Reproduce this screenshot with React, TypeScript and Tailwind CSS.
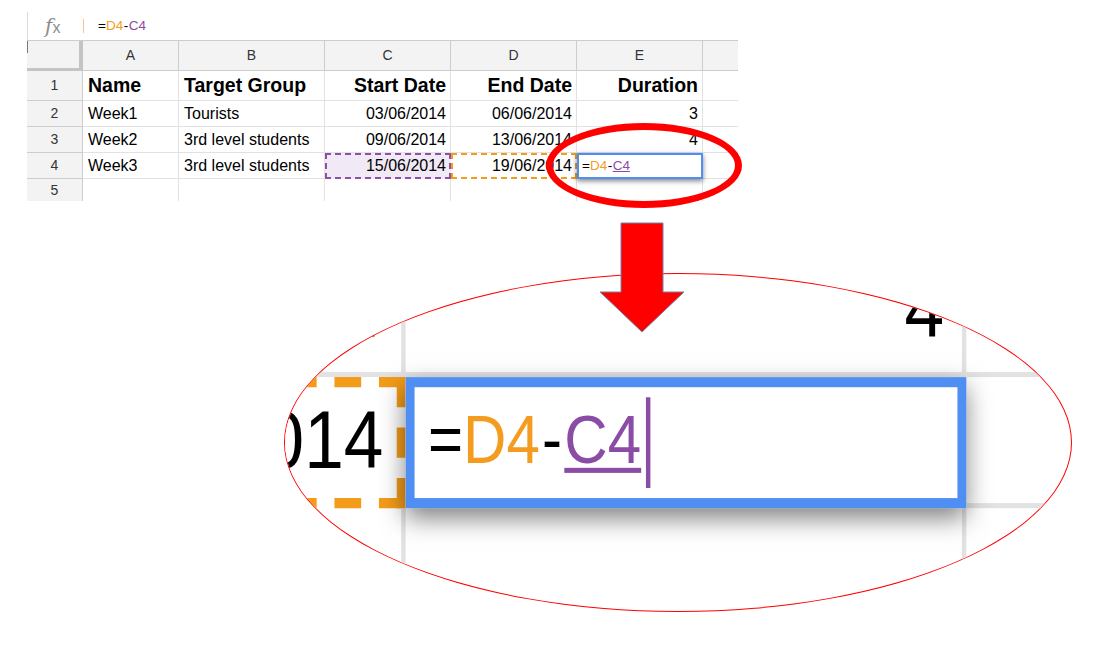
import React from "react";

const sans = "font-['Liberation_Sans',Arial,sans-serif]";

// grid lines
const cellBase = "flex items-center border-r border-b border-[#e2e2e2] overflow-hidden whitespace-nowrap";
const headBase = "flex items-center justify-center border-r border-b border-[#cdcdcd] bg-[#f3f3f3] text-[14px] text-[#333]";

const Formula: React.FC<{ underline?: boolean; caret?: boolean }> = ({ underline, caret }) => (
    <span className="flex items-center">
        <span className="text-black">=</span>
        <span className="text-[#f39c1f]">D4</span>
        <span className="px-[0.5px] text-black">-</span>
        <span className={underline ? "text-[#8b4ca6] underline decoration-[#8b4ca6]" : "text-[#8b4ca6]"}>C4</span>
        {caret && <span className="ml-[0.6px] h-[18px] w-[0.7px] bg-[#8b4ca6]" />}
    </span>
);

const Sheet: React.FC<{ caret?: boolean }> = ({ caret }) => {
    const rows = [
        { n: "1", a: "Name", b: "Target Group", c: "Start Date", d: "End Date", e: "Duration", bold: true },
        { n: "2", a: "Week1", b: "Tourists", c: "03/06/2014", d: "06/06/2014", e: "3" },
        { n: "3", a: "Week2", b: "3rd level students", c: "09/06/2014", d: "13/06/2014", e: "4" },
    ];

    return (
        <div className={`pl-[27px] pt-[12px] ${sans}`}>
            {/* formula bar */}
            <div className="flex h-[28px] w-[711px] items-center border-l border-[#dadada]">
                <div className="flex w-[55px] items-end pl-[17px] text-[#8c8c8c]">
                    <span className="font-['DejaVu_Serif',serif] text-[20px] italic leading-none">f</span>
                    <span className="text-[16px] leading-none">x</span>
                </div>
                <div className="h-[14px] w-px bg-[#f5c395]" />
                <div className="pl-[14px] text-[13.5px]">
                    <Formula />
                </div>
            </div>

            {/* grid */}
            <div className="grid w-[711px] grid-cols-[56px_96px_146px_126px_126px_126px_35px] grid-rows-[30px_30px_26px_26px_26px_22px] border-t border-[#cdcdcd] text-[16px] text-black">
                {/* column headers */}
                <div className="relative border-r-[4px] border-b-[3px] border-[#c4c4c4] bg-[#f3f3f3]">
                    <div className="absolute left-0 top-0 h-[12px] w-px bg-[#777]" />
                </div>
                <div className={headBase}>A</div>
                <div className={headBase}>B</div>
                <div className={headBase}>C</div>
                <div className={headBase}>D</div>
                <div className={`${headBase} bg-[#dcdcdc]`}>E</div>
                <div className="border-b border-[#cdcdcd] bg-[#f3f3f3]" />

                {rows.map((r) => (
                    <React.Fragment key={r.n}>
                        <div className={headBase}>{r.n}</div>
                        <div className={`${cellBase} pl-[5px] ${r.bold ? "text-[19.5px] font-bold" : ""}`}>{r.a}</div>
                        <div className={`${cellBase} pl-[5px] ${r.bold ? "text-[19.5px] font-bold" : ""}`}>{r.b}</div>
                        <div className={`${cellBase} justify-end pr-[4px] ${r.bold ? "text-[19.5px] font-bold" : ""}`}>{r.c}</div>
                        <div className={`${cellBase} justify-end pr-[4px] ${r.bold ? "text-[19.5px] font-bold" : ""}`}>{r.d}</div>
                        <div className={`${cellBase} justify-end pr-[4px] ${r.bold ? "text-[19.5px] font-bold" : ""}`}>{r.e}</div>
                        <div className="border-b border-[#e2e2e2]" />
                    </React.Fragment>
                ))}

                {/* row 4 with the reference selections */}
                <div className={`${headBase} bg-[#dcdcdc]`}>4</div>
                <div className={`${cellBase} pl-[5px]`}>Week3</div>
                <div className={`${cellBase} pl-[5px]`}>3rd level students</div>
                <div className="flex items-center justify-end border-2 border-dashed border-[#8e4fa8] bg-[#f1e9f5] pr-[3px]">15/06/2014</div>
                <div className="flex items-center justify-end border-2 border-dashed border-[#f39c19] bg-white pr-[3px]">19/06/2014</div>
                <div className="relative z-10 flex items-center border-2 border-[#4f8ef2] bg-white pl-[3px] text-[13.5px] shadow-[0_2px_5px_rgba(0,0,0,0.5)]">
                    <Formula underline caret={caret} />
                </div>
                <div className="border-b border-[#e2e2e2]" />

                {/* row 5, cut off */}
                <div className="flex items-center justify-center border-r border-[#cdcdcd] bg-[#f3f3f3] text-[14px] text-[#333]">5</div>
                <div className="border-r border-[#e2e2e2]" />
                <div className="border-r border-[#e2e2e2]" />
                <div className="border-r border-[#e2e2e2]" />
                <div className="border-r border-[#e2e2e2]" />
                <div className="border-r border-[#e2e2e2]" />
                <div />
            </div>
        </div>
    );
};

const App: React.FC = () => {
    return (
        <div className="relative h-[662px] w-[1118px] overflow-hidden bg-white">
            <Sheet />

            {/* hand drawn ring round E4 */}
            <div className="pointer-events-none absolute left-[546px] top-[123px] z-20 h-[85px] w-[196px] rounded-[50%] border-[7px] border-[#ff0000]" />

            {/* magnified view of E4 */}
            <div className="absolute left-[284px] top-[273px] h-[339px] w-[788px] overflow-hidden rounded-[50%] border border-[#ff0000] bg-white">
                <div className="absolute left-[-2446.65px] top-[-668.08px] w-[1118px] origin-top-left scale-x-[4.45] scale-y-[5.04]">
                    <Sheet caret />
                </div>
            </div>

            {/* arrow */}
            <svg className="absolute left-[598px] top-[221px] z-30" width="88" height="114" viewBox="0 0 88 114">
                <polygon
                    points="23,2 65,2 65,71 86,71 44,111 2,71 23,71"
                    fill="#ff0000"
                    stroke="#6f86aa"
                    strokeWidth="1"
                    strokeLinejoin="miter"
                />
            </svg>
        </div>
    );
};

export default App;
